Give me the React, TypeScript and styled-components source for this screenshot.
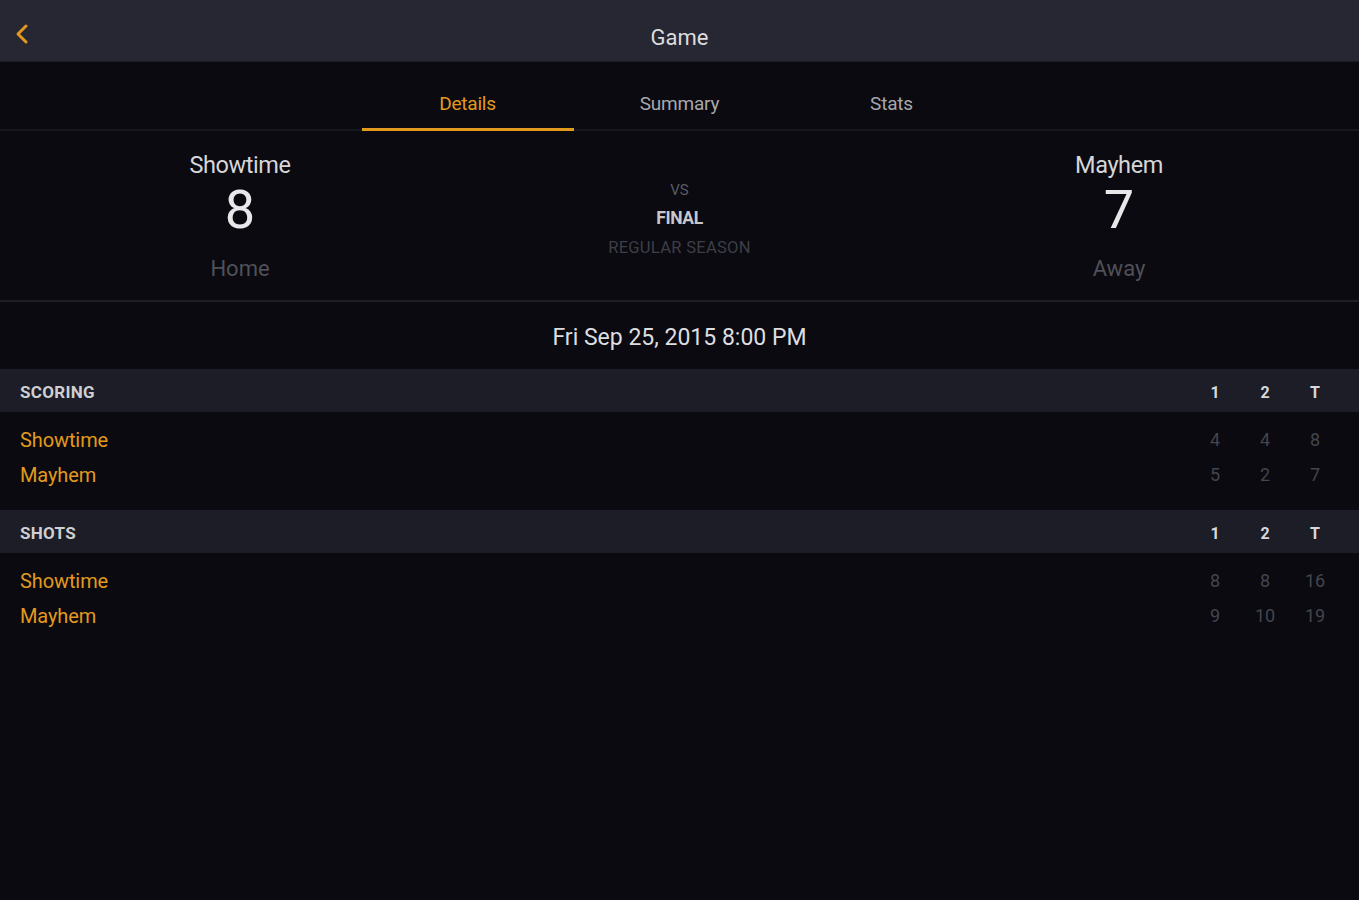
import React from "react";
import styled, { createGlobalStyle } from "styled-components";

const Global = createGlobalStyle`
  html, body { margin: 0; padding: 0; background: #0a0a10; }
  body { font-family: Roboto, "Liberation Sans", sans-serif; }
  * { box-sizing: border-box; }
`;

const Page = styled.div`
  width: 1359px;
  min-height: 900px;
  background: #0a0a10;
  display: flex;
  flex-direction: column;
`;

const Header = styled.header`
  height: 62px;
  background: #272734;
  display: grid;
  grid-template-columns: 60px 1fr 60px;
  align-items: center;
  border-bottom: 1px solid #1c1c26;
`;

const BackButton = styled.div`
  display: flex;
  align-items: center;
  padding-left: 14px;
  height: 100%;
  padding-top: 6px;
`;

const Title = styled.h1`
  margin: 0;
  text-align: center;
  font-size: 22px;
  font-weight: 400;
  color: #dcdcdc;
  padding-top: 14px;
`;

const Tabs = styled.nav`
  height: 69px;
  display: flex;
  justify-content: center;
  border-bottom: 2px solid #17171f;
`;

const Tab = styled.div<{ $active?: boolean }>`
  width: 212px;
  display: flex;
  align-items: center;
  justify-content: center;
  font-size: 19px;
  letter-spacing: -0.2px;
  color: ${(p) => (p.$active ? "#e39a1c" : "#a8a8ac")};
  border-bottom: 3px solid ${(p) => (p.$active ? "#e39a1c" : "transparent")};
  margin-bottom: -2px;
  padding-top: 16px;
`;

const Teams = styled.section`
  height: 171px;
  display: grid;
  grid-template-columns: 480px 1fr 480px;
  border-bottom: 2px solid #1e1e27;
`;

const TeamCol = styled.div`
  display: flex;
  flex-direction: column;
  align-items: center;
  padding-top: 20px;
`;

const TeamName = styled.div`
  font-size: 23.5px;
  color: #d6d6d8;
  letter-spacing: -0.4px;
  line-height: 28px;
`;

const Score = styled.div`
  font-size: 54px;
  color: #e8e8ea;
  line-height: 62px;
  font-weight: 400;
`;

const Side = styled.div`
  font-size: 22px;
  color: #505058;
  line-height: 28px;
  margin-top: 14px;
`;

const MidCol = styled.div`
  display: flex;
  flex-direction: column;
  align-items: center;
  padding-top: 50px;
`;

const Vs = styled.div`
  font-size: 15px;
  color: #5a5a62;
  line-height: 18px;
`;

const Final = styled.div`
  font-size: 17.5px;
  font-weight: 700;
  color: #c8c8cc;
  line-height: 18px;
  margin-top: 10px;
  letter-spacing: -0.4px;
`;

const Season = styled.div`
  font-size: 16.5px;
  color: #3e3e46;
  line-height: 18px;
  margin-top: 12px;
  letter-spacing: 0.3px;
`;

const DateRow = styled.div`
  height: 67px;
  display: flex;
  align-items: center;
  justify-content: center;
  font-size: 23px;
  color: #dedee0;
  letter-spacing: 0;
  padding-top: 4px;
`;

const SectionHeader = styled.div`
  height: 43px;
  background: #1c1d27;
  display: flex;
  align-items: center;
  padding: 2px 19px 0 20px;
`;

const SectionTitle = styled.div`
  flex: 1;
  font-size: 17px;
  font-weight: 700;
  color: #cfcfd3;
  letter-spacing: 0.3px;
`;

const Cells = styled.div`
  display: grid;
  grid-template-columns: repeat(3, 50px);
  justify-items: center;
`;

const HeadCell = styled.div`
  font-size: 16px;
  font-weight: 700;
  color: #d8d8dc;
  padding-top: 1px;
`;

const SectionBody = styled.div`
  padding: 10px 19px 18px 20px;
  display: flex;
  flex-direction: column;
`;

const Row = styled.div`
  height: 35px;
  display: flex;
  align-items: center;
`;

const RowName = styled.div`
  flex: 1;
  font-size: 20px;
  color: #e39a1c;
  letter-spacing: -0.1px;
`;

const Cell = styled.div`
  font-size: 18px;
  color: #45454d;
`;

const Chevron = () => (
  <svg width="16" height="22" viewBox="0 0 16 22" fill="none">
    <path d="M12 3 L4 11 L12 19" stroke="#e39a1c" strokeWidth="3" strokeLinecap="round" strokeLinejoin="round" />
  </svg>
);

type Line = { name: string; vals: (number | string)[] };

const Section = ({ title, rows }: { title: string; rows: Line[] }) => (
  <>
    <SectionHeader>
      <SectionTitle>{title}</SectionTitle>
      <Cells>
        <HeadCell>1</HeadCell>
        <HeadCell>2</HeadCell>
        <HeadCell>T</HeadCell>
      </Cells>
    </SectionHeader>
    <SectionBody>
      {rows.map((r) => (
        <Row key={r.name}>
          <RowName>{r.name}</RowName>
          <Cells>
            {r.vals.map((v, i) => (
              <Cell key={i}>{v}</Cell>
            ))}
          </Cells>
        </Row>
      ))}
    </SectionBody>
  </>
);

export default function App() {
  return (
    <Page>
      <Global />
      <Header>
        <BackButton>
          <Chevron />
        </BackButton>
        <Title>Game</Title>
        <div />
      </Header>
      <Tabs>
        <Tab $active>Details</Tab>
        <Tab>Summary</Tab>
        <Tab>Stats</Tab>
      </Tabs>
      <Teams>
        <TeamCol>
          <TeamName>Showtime</TeamName>
          <Score>8</Score>
          <Side>Home</Side>
        </TeamCol>
        <MidCol>
          <Vs>VS</Vs>
          <Final>FINAL</Final>
          <Season>REGULAR SEASON</Season>
        </MidCol>
        <TeamCol>
          <TeamName>Mayhem</TeamName>
          <Score>7</Score>
          <Side>Away</Side>
        </TeamCol>
      </Teams>
      <DateRow>Fri Sep 25, 2015 8:00 PM</DateRow>
      <Section
        title="SCORING"
        rows={[
          { name: "Showtime", vals: [4, 4, 8] },
          { name: "Mayhem", vals: [5, 2, 7] },
        ]}
      />
      <Section
        title="SHOTS"
        rows={[
          { name: "Showtime", vals: [8, 8, 16] },
          { name: "Mayhem", vals: [9, 10, 19] },
        ]}
      />
    </Page>
  );
}
